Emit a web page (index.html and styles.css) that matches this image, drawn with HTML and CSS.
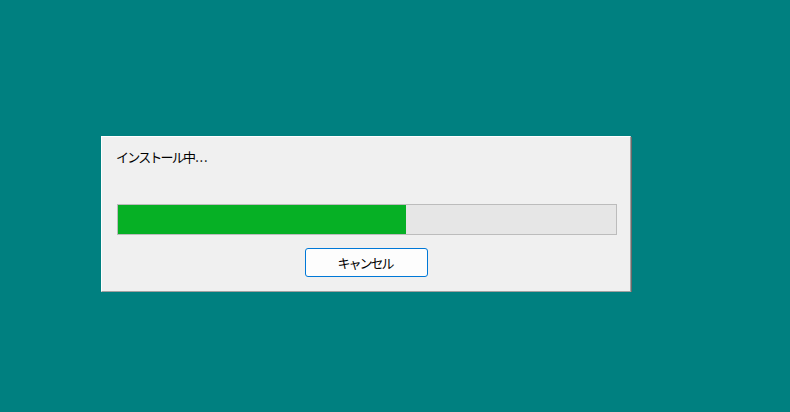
FILE: index.html
```html
<!DOCTYPE html>
<html lang="ja">
<head>
    <meta charset="UTF-8">
    <title>インストール中</title>
    <link rel="stylesheet" href="styles.css">
</head>
<body>
    <div class="window">
        <p class="status">インストール中<span class="dots">...</span></p>
        <div class="progress">
            <div class="progress-fill" style="width: 57.8%"></div>
        </div>
        <button class="btn">キャンセル</button>
    </div>
</body>
</html>
```

FILE: styles.css
```css
body {
    margin: 0;
    background-color: #008080;
    font-family: "Noto Sans CJK JP", "Noto Sans", sans-serif;
    font-size: 13px;
    color: #000;
}

.window {
    box-sizing: border-box;
    display: flex;
    flex-direction: column;
    width: 530px;
    height: 156px;
    margin: 136px 0 0 101px;
    padding: 10px 13px 14px 15px;
    background-color: #f0f0f0;
    border-top: 1px solid #ffffff;
    border-left: 1px solid #ffffff;
    border-right: 1px solid #a0a0a0;
    border-bottom: 1px solid #a0a0a0;
    box-shadow: 1px 1px 0 #696969;
}

.status {
    margin: 0 0 0 -1px;
    line-height: 20px;
    letter-spacing: -1.8px;
}

.dots {
    margin-left: 1px;
    letter-spacing: 0.8px;
}

.progress {
    box-sizing: border-box;
    width: 500px;
    height: 32px;
    margin-top: 37px;
    background-color: #e6e6e6;
    border: 1px solid #bcbcbc;
}

.progress-fill {
    height: 100%;
    background-color: #06b025;
}

.btn {
    box-sizing: border-box;
    align-self: center;
    width: 123px;
    height: 30px;
    margin-top: 13px;
    margin-left: -2px;
    padding: 0 2px 0 0;
    background-color: #fdfdfd;
    border: 1px solid #0078d7;
    border-radius: 3px;
    font-family: inherit;
    font-size: 13px;
    letter-spacing: -2px;
    color: #000;
}
```
